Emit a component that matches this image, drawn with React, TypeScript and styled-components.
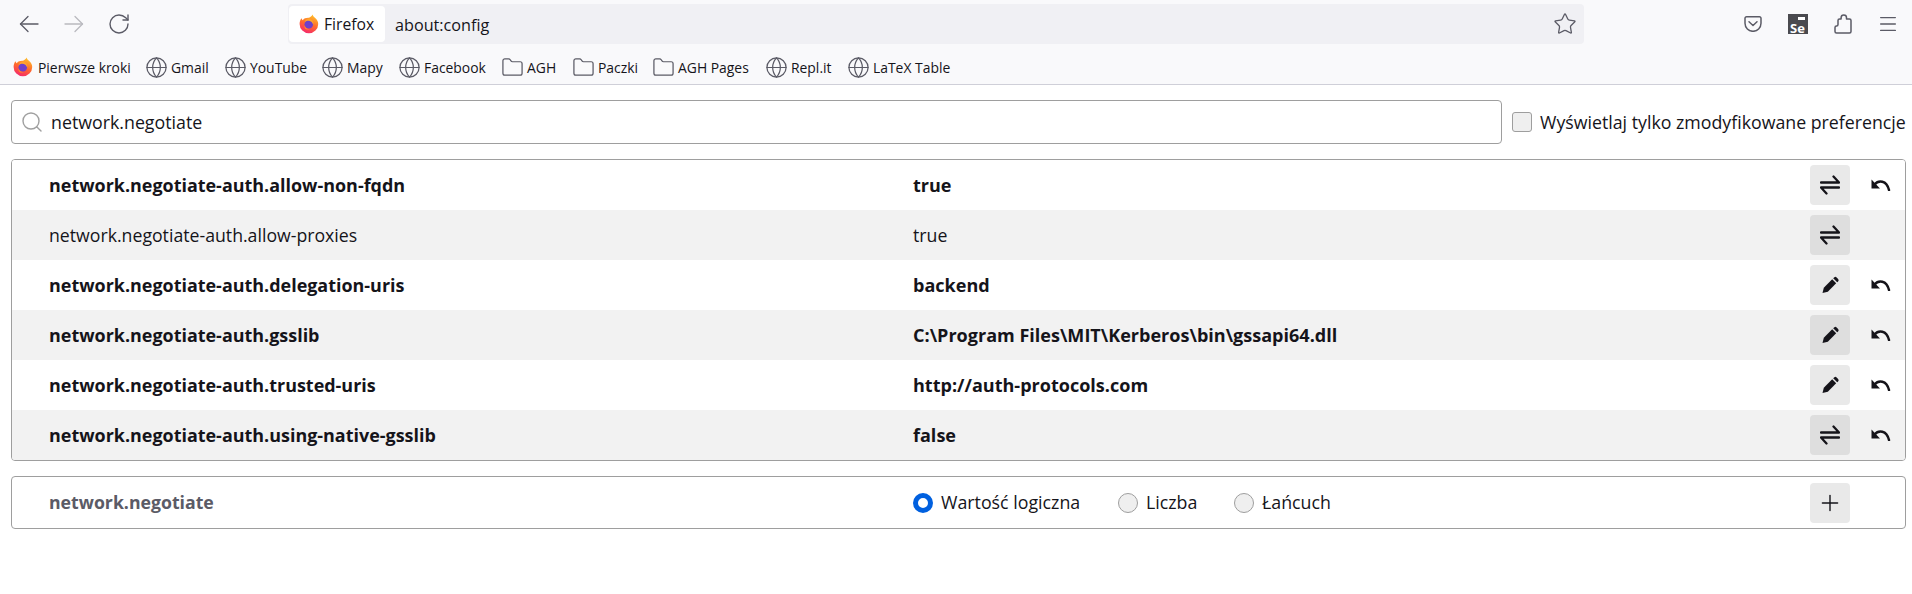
import React from "react";
import styled, { createGlobalStyle } from "styled-components";
import { RotateCw, Star, Menu, Globe, Folder, Search, Plus } from "lucide-react";

const GlobalStyle = createGlobalStyle`
  html, body {
    margin: 0;
    padding: 0;
    background: #fff;
  }
  body {
    font-family: "Open Sans", "Noto Sans", sans-serif;
    color: #15141a;
    overflow: hidden;
  }
`;

const bookmarks = [
  { label: "Pierwsze kroki", kind: "firefox", width: 132 },
  { label: "Gmail", kind: "globe", width: 79 },
  { label: "YouTube", kind: "globe", width: 97 },
  { label: "Mapy", kind: "globe", width: 77 },
  { label: "Facebook", kind: "globe", width: 103 },
  { label: "AGH", kind: "folder", width: 71 },
  { label: "Paczki", kind: "folder", width: 80 },
  { label: "AGH Pages", kind: "folder", width: 113 },
  { label: "Repl.it", kind: "globe", width: 82 },
  { label: "LaTeX Table", kind: "globe", width: 110 },
];

const prefs = [
  { name: "network.negotiate-auth.allow-non-fqdn", value: "true", action: "toggle", modified: true },
  { name: "network.negotiate-auth.allow-proxies", value: "true", action: "toggle", modified: false },
  { name: "network.negotiate-auth.delegation-uris", value: "backend", action: "edit", modified: true },
  { name: "network.negotiate-auth.gsslib", value: "C:\\Program Files\\MIT\\Kerberos\\bin\\gssapi64.dll", action: "edit", modified: true },
  { name: "network.negotiate-auth.trusted-uris", value: "http://auth-protocols.com", action: "edit", modified: true },
  { name: "network.negotiate-auth.using-native-gsslib", value: "false", action: "toggle", modified: true },
];

function FirefoxLogo() {
  return (
    <svg width="20" height="20" viewBox="0 0 20 20">
      <defs>
        <linearGradient id="fxBody" x1="0.7" y1="0" x2="0.3" y2="1">
          <stop offset="0" stopColor="#ffc22b" />
          <stop offset="0.5" stopColor="#ff6a2b" />
          <stop offset="1" stopColor="#f5266f" />
        </linearGradient>
      </defs>
      <path d="M13.5 0.5c.4 1.6 1.6 2.3 2.7 3.4 1.900 1.800 3 3.600 3 6.100a9.300 9.300 0 0 1-18.600 0C.6 7.600 1.400 5.600 2.600 4.300c.2 1 .6 1.500 1.200 1.900C5 4.300 7.400 3.600 10 3.800c1.200-.8 2.800-1.500 3.500-3.300z" fill="url(#fxBody)" />
      <circle cx="9.800" cy="10.300" r="4.300" fill="#6e3fc9" />
      <path d="M5.500 8.400c1.500-1.800 4.600-2.400 6.800-.6 1.200 1 1.800 2.200 1.800 3.500 1-2.800-.4-5.500-3-6.400-2.300-.8-4.800.6-5.600 3.500z" fill="#ffa62b" />
      <path d="M5.700 11.500c.5 2.500 2.800 3.900 5 3.400-2.600 1.800-6.200-.2-5-3.400z" fill="#ff8a2b" />
    </svg>
  );
}

function NavArrow({ flip }: { flip?: boolean }) {
  return (
    <svg width="20" height="18" viewBox="0 0 20 18" fill="none" stroke="currentColor" strokeWidth="1.300" strokeLinecap="round" strokeLinejoin="round" transform={flip ? "scale(-1 1)" : undefined}>
      <path d="M1.500 9H19" />
      <path d="M9 1.500L1.500 9 9 16.500" />
    </svg>
  );
}

function ToggleIcon() {
  return (
    <svg width="20" height="20" viewBox="0 0 20 20" fill="none" stroke="#15141a" strokeWidth="2.300" strokeLinecap="round" strokeLinejoin="round">
      <path d="M1 7.500H19L13.500 1.500" />
      <path d="M19 12.500H1L6.500 18.500" />
    </svg>
  );
}

function EditIcon() {
  return (
    <svg width="20" height="20" viewBox="0 0 20 20" fill="#15141a">
      <path d="M2.500 18l1.300-5.300 8.400-8.400 4 4-8.400 8.400z" />
      <path d="M13.200 3.300l.9-.9a1.800 1.800 0 0 1 2.500 0l1.500 1.500a1.800 1.800 0 0 1 0 2.500l-.9.9z" />
    </svg>
  );
}

function RevertIcon() {
  return (
    <svg width="20" height="12" viewBox="0 0 20 12" fill="none">
      <path d="M0.500 0.500V9.500H9z" fill="#15141a" />
      <path d="M3.500 5.500C7.500 .8 15.500 1 18 11" stroke="#15141a" strokeWidth="2.500" strokeLinecap="round" />
    </svg>
  );
}

function PocketIcon() {
  return (
    <svg width="18" height="16" viewBox="0 0 18 16" fill="none" stroke="#5b5b66" strokeWidth="1.500" strokeLinecap="round" strokeLinejoin="round">
      <path d="M2.500 .8h13A1.500 1.500 0 0 1 17 2.300v5a7.900 7.900 0 0 1-16 0v-5A1.500 1.500 0 0 1 2.500 .8z" />
      <path d="M5 5.800L9 9.500 13 5.800" />
    </svg>
  );
}

function PuzzleIcon() {
  return (
    <svg width="18" height="20" viewBox="0 0 18 20" fill="none" stroke="#5b5b66" strokeWidth="1.500" strokeLinejoin="round">
      <path d="M2.500 19h13a1.500 1.500 0 0 0 1.500-1.500V6.500A1.500 1.500 0 0 0 15.500 5h-3V3.700a2.700 2.700 0 0 0-5.400 0V5h-1.600A1.500 1.500 0 0 0 4 6.500v4A1.500 1.500 0 0 1 2.500 12 1.500 1.500 0 0 0 1 13.500v4A1.500 1.500 0 0 0 2.500 19z" />
    </svg>
  );
}

export default function App() {
  return (
    <>
      <GlobalStyle />
      <Chrome>
        <NavBar>
          <NavButton $color="#5b5b66"><NavArrow /></NavButton>
          <NavButton $color="#b9b9bf"><NavArrow flip /></NavButton>
          <NavButton $color="#5b5b66"><RotateCw size={24} strokeWidth={1.4} /></NavButton>
          <UrlBar>
            <Identity>
              <FirefoxLogo />
              <IdentityLabel>Firefox</IdentityLabel>
            </Identity>
            <UrlText>about:config</UrlText>
            <StarSlot><Star size={24} strokeWidth={1.3} /></StarSlot>
          </UrlBar>
          <ToolIcons>
            <ToolSlot><PocketIcon /></ToolSlot>
            <ToolSlot>
              <SeBadge>
                <SeCamera />
                Se
              </SeBadge>
            </ToolSlot>
            <ToolSlot><PuzzleIcon /></ToolSlot>
            <ToolSlot><Menu size={22} strokeWidth={1.5} /></ToolSlot>
          </ToolIcons>
        </NavBar>
        <BookmarkBar>
          {bookmarks.map((b) => (
            <Bookmark key={b.label} $width={b.width} $gap={b.kind === "firefox" ? 5 : 3}>
              {b.kind === "firefox" && <FirefoxLogo />}
              {b.kind === "globe" && <Globe size={23} strokeWidth={1.3} color="#5b5b66" />}
              {b.kind === "folder" && <Folder size={23} strokeWidth={1.3} color="#5b5b66" />}
              <BookmarkLabel>{b.label}</BookmarkLabel>
            </Bookmark>
          ))}
        </BookmarkBar>
      </Chrome>
      <Page>
        <SearchRow>
          <SearchBox>
            <Search size={24} strokeWidth={1.4} color="#a0a0a0" />
            <SearchText>network.negotiate</SearchText>
          </SearchBox>
          <CheckLabel>
            <CheckBox />
            <span>Wyświetlaj tylko zmodyfikowane preferencje</span>
          </CheckLabel>
        </SearchRow>
        <PrefTable>
          {prefs.map((p, i) => (
            <PrefRow key={p.name} $odd={i % 2 === 1}>
              <PrefName $bold={p.modified}>{p.name}</PrefName>
              <PrefValue $bold={p.modified}>{p.value}</PrefValue>
              <ActionButton $odd={i % 2 === 1}>
                {p.action === "toggle" ? <ToggleIcon /> : <EditIcon />}
              </ActionButton>
              <RevertSlot>{p.modified && <RevertIcon />}</RevertSlot>
            </PrefRow>
          ))}
        </PrefTable>
        <AddBox>
          <AddName>network.negotiate</AddName>
          <RadioGroup>
            <RadioLabel $width={205}><Radio $checked /><RadioText>Wartość logiczna</RadioText></RadioLabel>
            <RadioLabel $width={116}><Radio /><RadioText>Liczba</RadioText></RadioLabel>
            <RadioLabel $width={200}><Radio /><RadioText>Łańcuch</RadioText></RadioLabel>
          </RadioGroup>
          <ActionButton><Plus size={26} strokeWidth={1.3} /></ActionButton>
          <RevertSlot />
        </AddBox>
      </Page>
    </>
  );
}

const Chrome = styled.header`
  height: 85px;
  box-sizing: border-box;
  background: #f9f9fb;
  border-bottom: 1px solid #cfcfd8;
  display: flex;
  flex-direction: column;
`;

const NavBar = styled.div`
  height: 48px;
  padding: 4px 0 0 6px;
  box-sizing: border-box;
  display: flex;
  align-items: flex-start;
`;

const NavButton = styled.div<{ $color: string }>`
  width: 45px;
  height: 40px;
  display: flex;
  align-items: center;
  justify-content: center;
  color: ${(p) => p.$color};
`;

const UrlBar = styled.div`
  margin-left: 147px;
  width: 1296px;
  height: 40px;
  background: #f0f0f4;
  border-radius: 4px;
  display: flex;
  align-items: center;
  padding: 0 0 0 1px;
  box-sizing: border-box;
`;

const Identity = styled.div`
  width: 96px;
  height: 36px;
  background: #fff;
  border-radius: 4px;
  display: flex;
  align-items: center;
  gap: 5px;
  padding-left: 10px;
  box-sizing: border-box;
`;

const IdentityLabel = styled.span`
  font-size: 15.700px;
`;

const UrlText = styled.span`
  margin-left: 10px;
  padding-top: 2px;
  font-size: 16.200px;
  flex: 1;
`;

const StarSlot = styled.div`
  width: 38px;
  display: flex;
  justify-content: center;
  color: #5b5b66;
`;

const ToolIcons = styled.div`
  margin-left: 146px;
  height: 40px;
  display: flex;
  align-items: center;
`;

const ToolSlot = styled.div`
  width: 45px;
  display: flex;
  justify-content: center;
  color: #5b5b66;
`;

const SeBadge = styled.div`
  position: relative;
  width: 20px;
  height: 20px;
  background: #4a4a4f;
  color: #fff;
  font-size: 13px;
  font-weight: 700;
  line-height: 12px;
  padding-top: 8px;
  box-sizing: border-box;
  text-align: center;
`;

const SeCamera = styled.span`
  position: absolute;
  top: 3px;
  right: 3px;
  width: 7px;
  height: 3px;
  background: #fff;
`;

const BookmarkBar = styled.div`
  flex: 1;
  padding: 2px 0 0 13px;
  display: flex;
  align-items: center;
`;

const Bookmark = styled.div<{ $width: number; $gap: number }>`
  width: ${(p) => p.$width}px;
  flex: none;
  display: flex;
  align-items: center;
  gap: ${(p) => p.$gap}px;
`;

const BookmarkLabel = styled.span`
  font-size: 13.900px;
  white-space: nowrap;
`;

const Page = styled.main`
  padding: 15px 6px 0 11px;
`;

const SearchRow = styled.div`
  display: flex;
  align-items: center;
`;

const SearchBox = styled.div`
  width: 1491px;
  height: 44px;
  box-sizing: border-box;
  border: 1px solid #9e9e9e;
  border-radius: 4px;
  display: flex;
  align-items: center;
  gap: 7px;
  padding-left: 8px;
`;

const SearchText = styled.span`
  font-size: 17.800px;
`;

const CheckLabel = styled.label`
  margin-left: 10px;
  display: flex;
  align-items: center;
  gap: 8px;
  font-size: 17.750px;
  white-space: nowrap;
`;

const CheckBox = styled.span`
  width: 20px;
  height: 20px;
  box-sizing: border-box;
  border: 1px solid #9e9e9e;
  border-radius: 3px;
  background: #efefef;
`;

const PrefTable = styled.section`
  margin-top: 15px;
  border: 1px solid #9e9e9e;
  border-radius: 4px;
  overflow: hidden;
`;

const PrefRow = styled.div<{ $odd: boolean }>`
  height: 50px;
  background: ${(p) => (p.$odd ? "#f2f2f2" : "#fff")};
  display: flex;
  align-items: center;
  padding-left: 37px;
`;

const PrefName = styled.div<{ $bold: boolean }>`
  width: 864px;
  font-size: ${(p) => (p.$bold ? 17.95 : 17.7)}px;
  font-weight: ${(p) => (p.$bold ? 700 : 400)};
`;

const PrefValue = styled.div<{ $bold: boolean }>`
  flex: 1;
  font-size: ${(p) => (p.$bold ? 18.05 : 17.7)}px;
  font-weight: ${(p) => (p.$bold ? 700 : 400)};
`;

const ActionButton = styled.div<{ $odd?: boolean }>`
  width: 40px;
  height: 40px;
  border-radius: 4px;
  background: ${(p) => (p.$odd ? "#dedede" : "#e9e9e9")};
  display: flex;
  align-items: center;
  justify-content: center;
  color: #15141a;
`;

const RevertSlot = styled.div`
  width: 55px;
  box-sizing: border-box;
  padding-left: 21px;
  display: flex;
`;

const AddBox = styled.section`
  margin-top: 15px;
  height: 53px;
  box-sizing: border-box;
  border: 1px solid #9e9e9e;
  border-radius: 4px;
  display: flex;
  align-items: center;
  padding-left: 37px;
`;

const AddName = styled.div`
  width: 864px;
  padding-bottom: 2px;
  font-size: 17.700px;
  font-weight: 700;
  color: #5b5b66;
`;

const RadioGroup = styled.div`
  flex: 1;
  display: flex;
`;

const RadioLabel = styled.label<{ $width: number }>`
  width: ${(p) => p.$width}px;
  display: flex;
  align-items: center;
  gap: 8px;
`;

const RadioText = styled.span`
  font-size: 17.800px;
  padding-bottom: 1px;
`;

const Radio = styled.span<{ $checked?: boolean }>`
  width: 20px;
  height: 20px;
  border-radius: 50%;
  box-sizing: border-box;
  background: ${(p) => (p.$checked ? "#fff" : "#efefef")};
  border: ${(p) => (p.$checked ? "5px solid #0060df" : "1px solid #9e9e9e")};
`;
